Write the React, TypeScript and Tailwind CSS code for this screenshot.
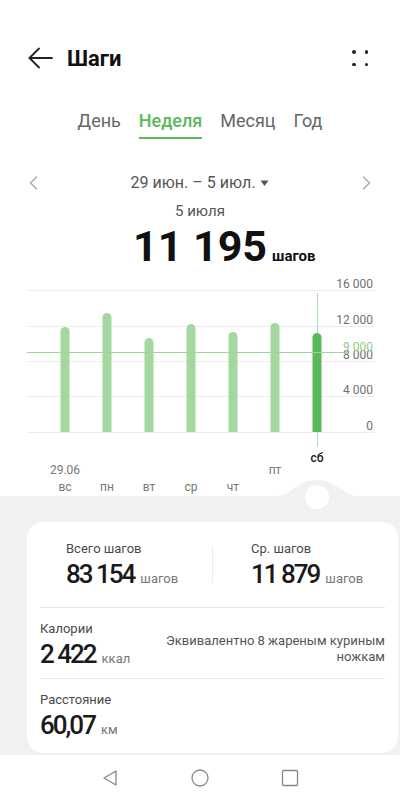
import React from "react";

const bars = [
  { x: 65, top: 327 },
  { x: 107, top: 313 },
  { x: 149, top: 338 },
  { x: 191, top: 324 },
  { x: 233, top: 332 },
  { x: 275, top: 323 },
  { x: 317, top: 333, active: true },
];

const grid = [
  { y: 290.5, label: "16 000" },
  { y: 326.5, label: "12 000" },
  { y: 361.5, label: "8 000" },
  { y: 396.5, label: "4 000" },
  { y: 432.5, label: "0" },
];

// chart svg starts at page y=266
const OY = 266;

const barPath = (x: number, top: number, bottom: number) => {
  const r = 4.5;
  return `M ${x - r} ${bottom} V ${top + r} A ${r} ${r} 0 0 1 ${x + r} ${top + r} V ${bottom} Z`;
};

const Chart = () => (
  <svg width="400" height="244" viewBox={`0 ${OY} 400 244`} className="block shrink-0">
    {grid.map((g) => (
      <g key={g.label}>
        <line x1="27" x2="375" y1={g.y} y2={g.y} stroke="#ededed" strokeWidth="1" />
        <text x="373" y={g.y - 2.5} textAnchor="end" fontSize="12" fill="#707070" fontFamily="Roboto, sans-serif">
          {g.label}
        </text>
      </g>
    ))}
    <line x1="317.5" x2="317.5" y1="293" y2="447" stroke="#b2dcae" strokeWidth="1" />
    {bars.map((b) => (
      <path key={b.x} d={barPath(b.x, b.top, 432)} fill={b.active ? "#5cb85c" : "#a4d89f"} />
    ))}
    <line x1="27" x2="347" y1="352.5" y2="352.5" stroke="#9fd49a" strokeWidth="1" />
    <text x="373" y="350.5" textAnchor="end" fontSize="12" fill="#8fcc8a" fontFamily="Roboto, sans-serif">
      9 000
    </text>
    <g fontFamily="Roboto, sans-serif" fontSize="12" textAnchor="middle">
      <text x="317" y="462" fill="#1a1a1a" fontWeight="500">сб</text>
      <text x="65" y="474" fill="#777">29.06</text>
      <text x="275" y="474" fill="#777">пт</text>
      <text x="65" y="491" fill="#777">вс</text>
      <text x="107" y="491" fill="#777">пн</text>
      <text x="149" y="491" fill="#777">вт</text>
      <text x="191" y="491" fill="#777">ср</text>
      <text x="233" y="491" fill="#777">чт</text>
    </g>
    <rect x="0" y="496" width="400" height="14" fill="#f1f1f1" />
    <path d="M 272 496.5 C 294 496.5, 295 480, 317 480 C 339 480, 340 496.5, 362 496.5 Z" fill="#f1f1f1" />
    <circle cx="317" cy="497" r="12" fill="#ffffff" />
  </svg>
);

const Stat = ({ label, value, unit }: { label: string; value: string; unit: string }) => (
  <div className="flex flex-col">
    <span className="text-[13px] leading-[18px] text-[#4a4a4a]">{label}</span>
    <div className="mt-[2px] flex items-baseline h-[28px]">
      <span className="text-[26px] leading-[28px] font-medium tracking-[-2px] text-[#1a1a1a]">{value}</span>
      <span className="ml-[6px] text-[13px] leading-[18px] text-[#777]">{unit}</span>
    </div>
  </div>
);

export default function App() {
  return (
    <div className="w-[400px] h-[800px] bg-white flex flex-col overflow-hidden" style={{ fontFamily: "Roboto, 'Noto Sans', sans-serif" }}>
      <div className="h-[30px] shrink-0" />
      {/* header */}
      <div className="h-[56px] shrink-0 flex items-center pl-[28px] pr-[32px]">
        <svg width="25" height="22" viewBox="0 0 25 22" fill="none" stroke="#222" strokeWidth="1.8" strokeLinecap="round" strokeLinejoin="round">
          <path d="M24 11 H1.5" />
          <path d="M11 1.5 L1.5 11 L11 20.5" />
        </svg>
        <h1 className="ml-[14px] text-[22px] font-bold text-[#111]">Шаги</h1>
        <div className="ml-auto grid grid-cols-2 gap-x-[9px] gap-y-[9px]">
          <span className="w-[3.5px] h-[3.5px] rounded-full bg-[#222]" />
          <span className="w-[3.5px] h-[3.5px] rounded-full bg-[#222]" />
          <span className="w-[3.5px] h-[3.5px] rounded-full bg-[#222]" />
          <span className="w-[3.5px] h-[3.5px] rounded-full bg-[#222]" />
        </div>
      </div>

      {/* tabs */}
      <div className="mt-[23px] h-[30px] shrink-0 flex items-start justify-center gap-[18px] text-[18px] leading-[24px] text-[#666]">
        <span>День</span>
        <div className="flex flex-col items-center">
          <span className="font-medium text-[#5cb85c]">Неделя</span>
          <span className="mt-[4px] h-[2px] w-full bg-[#5cb85c]" />
        </div>
        <span>Месяц</span>
        <span>Год</span>
      </div>

      {/* date range */}
      <div className="mt-[34px] h-[20px] shrink-0 flex items-center justify-between px-[29px]">
        <svg width="9" height="14" viewBox="0 0 9 14" fill="none" stroke="#aaa" strokeWidth="1.4" strokeLinecap="round" strokeLinejoin="round">
          <path d="M7.5 1 L1.5 7 L7.5 13" />
        </svg>
        <div className="flex items-center text-[16px] leading-[20px] text-[#555]">
          <span>29 июн. – 5 июл.</span>
          <svg width="9" height="7" viewBox="0 0 9 7" className="ml-[5px]">
            <path d="M0.5 0.5 H8.5 L4.5 6 Z" fill="#555" />
          </svg>
        </div>
        <svg width="9" height="14" viewBox="0 0 9 14" fill="none" stroke="#aaa" strokeWidth="1.4" strokeLinecap="round" strokeLinejoin="round">
          <path d="M1.5 1 L7.5 7 L1.5 13" />
        </svg>
      </div>

      <div className="mt-[8px] h-[20px] shrink-0 text-center text-[15px] leading-[20px] text-[#555]">5 июля</div>

      <div className="mt-[6px] h-[39px] shrink-0 grid grid-cols-[1fr_auto_1fr] items-baseline">
        <span />
        <span className="text-[43px] leading-[39px] font-bold text-[#111]">11 195</span>
        <span className="ml-[5px] text-[15px] leading-[18px] font-bold text-[#111]">шагов</span>
      </div>

      <Chart />

      {/* summary */}
      <div className="h-[245px] shrink-0 bg-[#f1f1f1] pl-[27px] pr-[2px] pt-[12px]">
        <div className="bg-white rounded-[16px] px-[13px]">
          <div className="flex pt-[18px] pb-[19px]">
            <div className="w-[172px] pl-[26px]">
              <Stat label="Всего шагов" value="83 154" unit="шагов" />
            </div>
            <div className="w-px h-[37px] self-center bg-[#ececec]" />
            <div className="flex-1 pl-[38px]">
              <Stat label="Ср. шагов" value="11 879" unit="шагов" />
            </div>
          </div>
          <div className="h-px bg-[#e6e6e6]" />
          <div className="flex justify-between pt-[12px] pb-[10px]">
            <Stat label="Калории" value="2 422" unit="ккал" />
            <div className="text-right text-[13px] leading-[16px] text-[#555] pt-[13px]">
              Эквивалентно 8 жареным куриным
              <br />
              ножкам
            </div>
          </div>
          <div className="h-px bg-[#e6e6e6]" />
          <div className="pt-[12px] pb-[14px]">
            <Stat label="Расстояние" value="60,07" unit="км" />
          </div>
        </div>
      </div>

      {/* nav bar */}
      <div className="h-[45px] shrink-0 bg-white flex items-center justify-center gap-[72px]">
        <svg width="18" height="18" viewBox="0 0 18 18" fill="none" stroke="#888" strokeWidth="1.3" strokeLinejoin="round">
          <path d="M15 2 L3 9 L15 16 Z" />
        </svg>
        <svg width="18" height="18" viewBox="0 0 18 18" fill="none" stroke="#888" strokeWidth="1.3">
          <circle cx="9" cy="9" r="8" />
        </svg>
        <svg width="18" height="18" viewBox="0 0 18 18" fill="none" stroke="#888" strokeWidth="1.3">
          <rect x="1.5" y="1.5" width="15" height="15" rx="1" />
        </svg>
      </div>
    </div>
  );
}
